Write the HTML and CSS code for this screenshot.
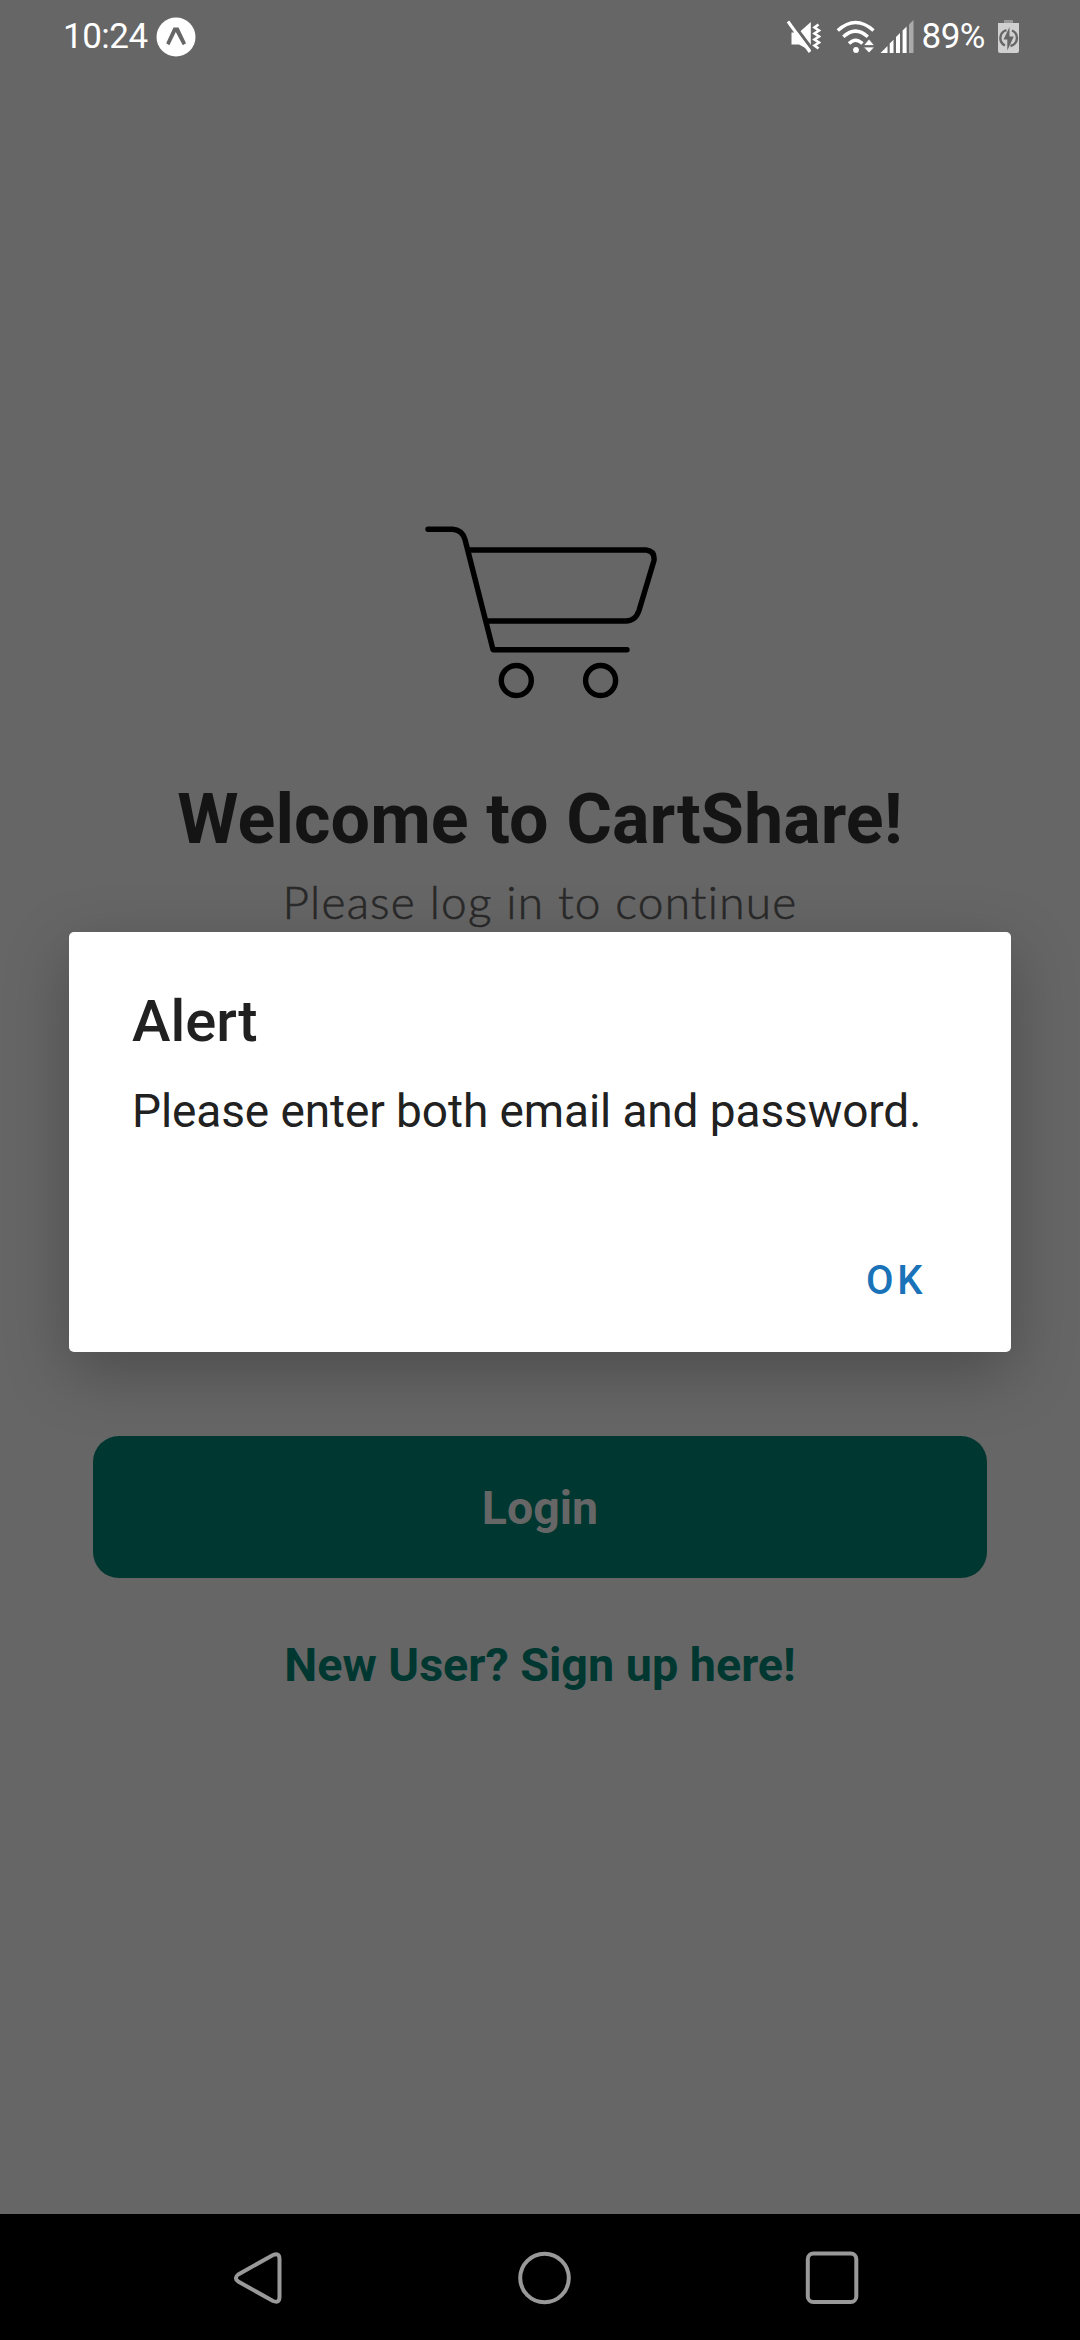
FILE: index.html
```html
<!DOCTYPE html>
<html lang="en">
<head>
<meta charset="utf-8">
<title>CartShare</title>
<link rel="stylesheet" href="styles.css">
</head>
<body>
<div class="phone">
  <header class="status">
    <div class="status-group">
      <span class="clock">10:24</span>
      <svg class="app-badge" width="40" height="40" viewBox="0 0 40 40"><circle cx="20" cy="20" r="19.5" fill="#fff"/><path d="M17.500 10.500h5l7.500 15.700-3.200 2-7-13.200-6.400 13.200-3.200-2z" fill="#666"/></svg>
    </div>
    <div class="status-group">
      <svg width="34" height="34" viewBox="0 0 34 34"><path d="M4.500 12.500h7.500L23.800 2V31L12 24.500H4.500z" fill="#fff"/><path d="M2.500 -1L27 31.500" stroke="#666" stroke-width="3"/><path d="M1 1.500L23 32" stroke="#fff" stroke-width="3"/><path d="M31.500 4.500l-4 3 4.500 3-4.500 3 4.500 3-4.500 3 4.500 3-4.500 3 4 3" fill="none" stroke="#fff" stroke-width="2.600"/></svg>
      <svg class="wifi" width="40" height="34" viewBox="0 0 40 34"><g fill="none" stroke="#fff" stroke-width="3.400"><path d="M1.800 10.500Q19.500-5.500 37.500 10.500"/><path d="M7.300 16.800Q19.500 5.500 31.800 16.800"/><path d="M13 23.500Q19.500 17 26.500 23.500"/></g><circle cx="20" cy="30" r="2.900" fill="#fff"/><path d="M33 19l5.500 6.500h-11zM33 33l-5.500-6h11z" fill="#fff" stroke="#666" stroke-width=".8"/></svg>
      <svg class="signal" width="34" height="34" viewBox="0 0 34 34"><path d="M0.500 33L7.500 26V33zM9.700 33V23.500L13.500 19.700V33zM16 33V17L20 13V33zM22.600 33V10.500L26.600 6.500V33z" fill="#fff"/><path d="M29 33V4.500L33.500 0V33z" fill="#aaa"/></svg>
      <span class="percent">89%</span>
      <svg width="21" height="34" viewBox="0 0 21 34"><path d="M0 3h21v28a2 2 0 0 1-2 2H2a2 2 0 0 1-2-2z" fill="#d0d0d0"/><path d="M6 0h9v3H6z" fill="#999"/><path d="M8.500 10.200a8.200 8.200 0 0 0-1.500 15.300M14 10.500a8.200 8.200 0 0 1-1.500 15.500" fill="none" stroke="#666" stroke-width="2.400"/><path d="M11.500 7L5.500 19.500h3.800v11L15.800 16.500H11.500z" fill="#666"/></svg>
    </div>
  </header>

  <main class="login">
    <svg class="cart" width="234" height="176" viewBox="0 0 234 176" fill="none" stroke="#000" stroke-width="5.400" stroke-linecap="round" stroke-linejoin="round"><path d="M3 5.300H27.500Q37 5.800 40 15.500L68 125.700H202"/><path d="M44 26H221Q230 27 229 36.500L214 86.500Q210.500 97 201 97H62"/><circle cx="91.300" cy="156.500" r="15"/><circle cx="175.600" cy="156.500" r="15"/></svg>
    <h1 class="title">Welcome to CartShare!</h1>
    <p class="subtitle">Please log in to continue</p>
    <button class="login-button">Login</button>
    <a class="signup">New User? Sign up here!</a>
  </main>

  <nav class="navbar">
    <svg width="52" height="54" viewBox="0 0 52 54"><path d="M5.200 23.500L40 4Q46.500 1.500 46.500 8V46Q46.500 52.500 40 50L5.200 30.500Q.500 27 5.200 23.500Z"/></svg>
    <svg width="54" height="54" viewBox="0 0 54 54"><circle cx="26.500" cy="27" r="24.300"/></svg>
    <svg width="54" height="54" viewBox="0 0 54 54"><rect x="2.800" y="2.500" width="48.500" height="48.500" rx="5.500"/></svg>
  </nav>

  <section class="dialog" role="alertdialog">
    <h2 class="dialog-title">Alert</h2>
    <p class="dialog-message">Please enter both email and password.</p>
    <button class="dialog-ok">OK</button>
  </section>
</div>
</body>
</html>
```

FILE: styles.css
```css
* { box-sizing: border-box; }
body { margin: 0; }
h1, h2, p { margin: 0; }
button { border: 0; padding: 0; background: none; font-family: inherit; }
svg { display: block; flex: none; }

.phone {
  position: relative;
  display: flex;
  flex-direction: column;
  width: 1080px;
  height: 2340px;
  overflow: hidden;
  background: #666;
  font-family: Roboto, sans-serif;
  white-space: nowrap;
}

.status {
  display: flex;
  justify-content: space-between;
  height: 74px;
  padding: 0 61px 0 63px;
  color: #fff;
  font-size: 35px;
  letter-spacing: -.5px;
  line-height: 74px;
}
.status-group { display: flex; align-items: center; }
.app-badge { margin-left: 8px; }
.wifi { margin-left: 15px; }
.signal { margin-left: 4px; }
.percent { margin: 0 13px 0 8px; }

.login {
  flex: 1;
  display: flex;
  flex-direction: column;
  align-items: center;
  padding: 450px 93px 0;
}
.cart { margin-left: 4px; }
.title {
  margin-top: 74px;
  color: #141414;
  font-size: 70px;
  font-weight: 700;
  letter-spacing: .08px;
  line-height: 90px;
}
.subtitle {
  margin-top: 10px;
  color: #292929;
  font-family: Lato, sans-serif;
  font-size: 46px;
  font-weight: 300;
  font-variant-ligatures: none;
  letter-spacing: 1.2px;
  line-height: 56px;
  -webkit-text-stroke: .6px #292929;
}
.login-button {
  align-self: stretch;
  height: 142px;
  margin-top: 506px;
  padding-top: 2px;
  border-radius: 26px;
  background: #003831;
  color: #666;
  font-size: 46.5px;
  font-weight: 700;
  line-height: 140px;
}
.signup {
  margin-top: 57px;
  color: #003831;
  font-size: 46.7px;
  font-weight: 700;
  line-height: 60px;
}

.navbar {
  display: flex;
  align-items: center;
  gap: 233px;
  height: 126px;
  padding: 2px 0 0 233px;
  background: #000;
  fill: none;
  stroke: #999;
  stroke-width: 4;
}

.dialog {
  position: absolute;
  left: 69px;
  top: 932px;
  display: flex;
  flex-direction: column;
  width: 942px;
  height: 420px;
  padding: 54px 63px 0;
  border-radius: 5px;
  background: #fff;
  box-shadow: 0 20px 64px rgba(0, 0, 0, .26);
  color: #212121;
}
.dialog-title {
  font-size: 58px;
  font-weight: 500;
  line-height: 70px;
}
.dialog-message {
  margin-top: 25px;
  font-size: 46px;
  letter-spacing: -.1px;
  line-height: 60px;
}
.dialog-ok {
  align-self: flex-end;
  width: 104px;
  height: 100px;
  margin: 90px 0 0;
  color: #1a73b8;
  font-size: 40px;
  font-weight: 500;
  letter-spacing: 3.500px;
  line-height: 100px;
}
```
